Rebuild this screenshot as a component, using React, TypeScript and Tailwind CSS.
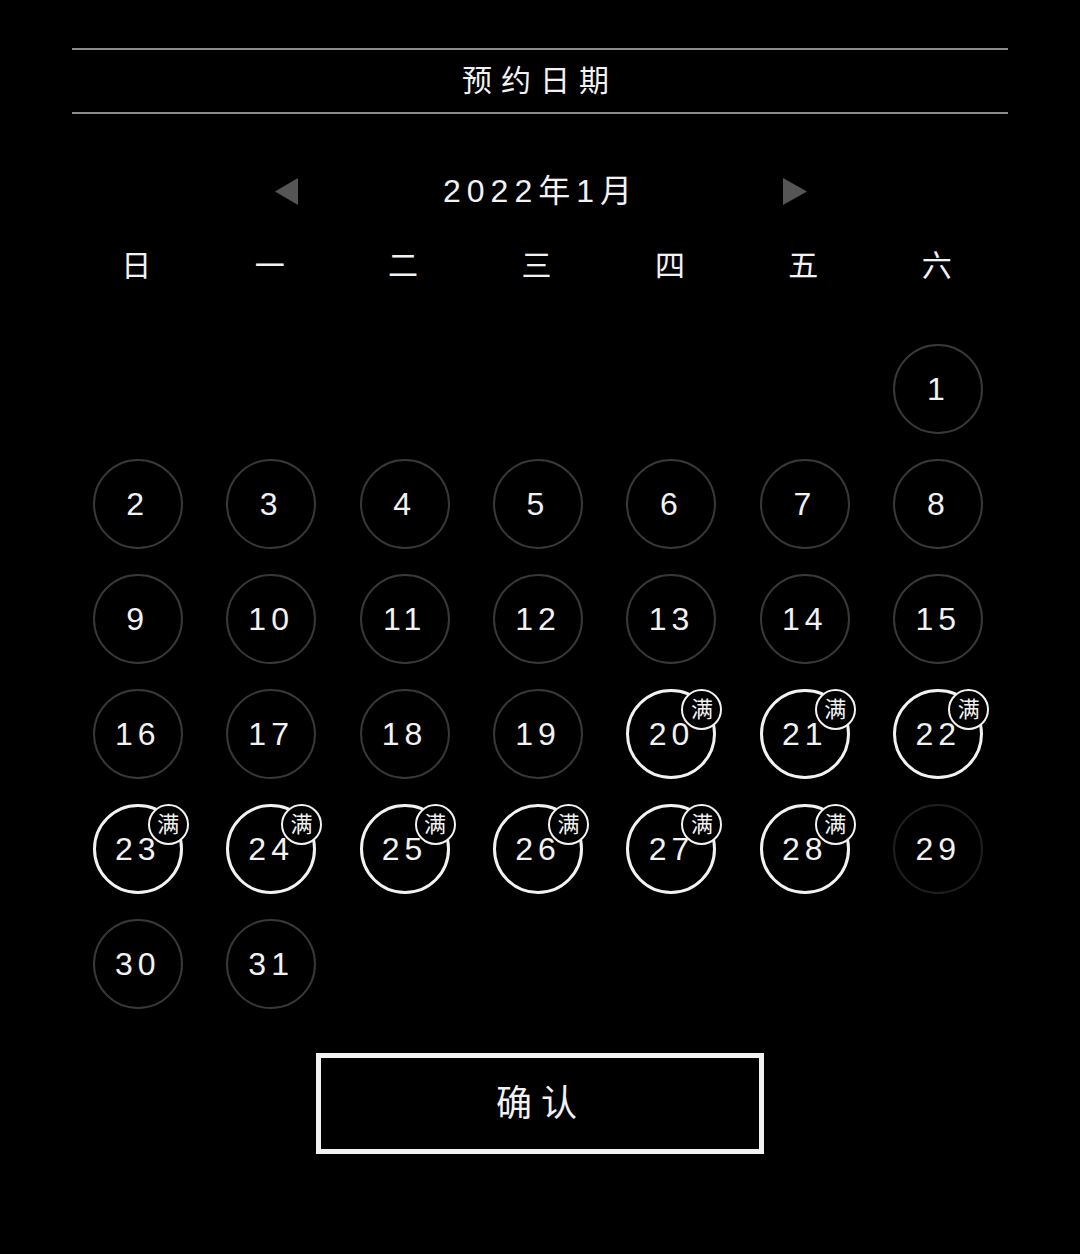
const FONT = { fontFamily: '"Liberation Sans", "Noto Sans CJK SC", sans-serif' };

const weekdays = ["日", "一", "二", "三", "四", "五", "六"];

type Day = { n: number; full?: boolean; dim?: boolean } | null;

const days: Day[] = [
  null, null, null, null, null, null, { n: 1 },
  ...Array.from({ length: 31 }, (_, i) => {
    const n = i + 1;
    return { n, full: n >= 20 && n <= 28, dim: n === 29 };
  }).slice(1),
];

function DayCell({ day }: { day: Day }) {
  if (!day) return <div className="h-[90px]" />;
  const ring = day.full
    ? "border-[3px] border-[#f2f2f2]"
    : day.dim
      ? "border-2 border-[#1f1f1f]"
      : "border-2 border-[#383838]";
  return (
    <div className="flex justify-center">
      <div className={`relative w-[90px] h-[90px] rounded-full flex items-center justify-center ${ring}`}>
        <span className="text-[32px] tracking-[5px] text-[#f2f2f2] leading-none">{day.n}</span>
        {day.full && (
          <div className="absolute top-[-3px] right-[-9px] w-[41px] h-[41px] rounded-full bg-black border-[2.5px] border-[#f2f2f2] flex items-center justify-center">
            <span className="text-[22px] text-[#f2f2f2] leading-none">满</span>
          </div>
        )}
      </div>
    </div>
  );
}

export default function App() {
  return (
    <div className="min-h-[1254px] bg-black text-[#f2f2f2] pt-[48px]" style={FONT}>
      <div className="mx-[72px] h-[66px] border-y-2 border-[#8a8a8a] flex items-center justify-center">
        <span className="text-[30px] tracking-[9px] leading-none">预约日期</span>
      </div>

      <div className="mt-[52px] h-[50px] flex items-center justify-center gap-[145px] pl-[2px]">
        <svg width="23" height="27" viewBox="0 0 23 27">
          <polygon points="23,0 23,27 0,13.5" fill="#555555" />
        </svg>
        <span className="text-[32px] tracking-[6px] leading-none">2022年1月</span>
        <svg width="24" height="27" viewBox="0 0 24 27">
          <polygon points="0,0 0,27 24,13.5" fill="#555555" />
        </svg>
      </div>

      <div className="ml-[71px] w-[934px] mt-[25px] h-[50px] grid grid-cols-7 items-center">
        {weekdays.map((w) => (
          <div key={w} className="text-center text-[30px] leading-none tracking-[3px]">
            {w}
          </div>
        ))}
      </div>

      <div className="ml-[71px] w-[934px] mt-[53px] grid grid-cols-7 gap-y-[25px]">
        {days.map((d, i) => (
          <DayCell key={i} day={d} />
        ))}
      </div>

      <div className="mt-[44px] flex justify-center">
        <button className="w-[448px] h-[101px] border-[5px] border-[#f2f2f2] bg-black flex items-center justify-center">
          <span className="text-[36px] tracking-[9px] pl-[2px] leading-none text-[#f2f2f2]">确认</span>
        </button>
      </div>
    </div>
  );
}
